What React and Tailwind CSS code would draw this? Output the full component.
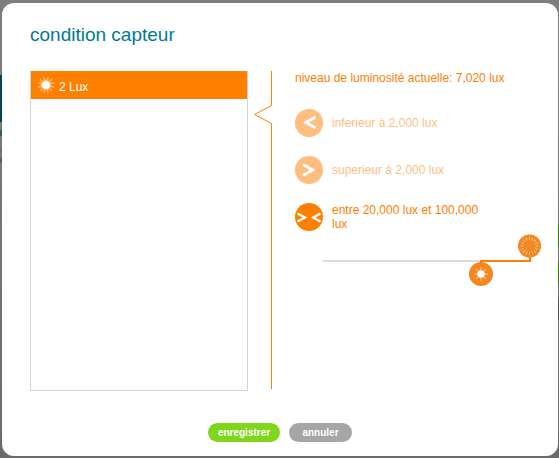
import React, { useState } from 'react';

const conditions = [
  { id: 'below', label: 'inferieur à 2,000 lux', paths: ['M20.5 8 11 13.500l9.500 5.500'] },
  { id: 'above', label: 'superieur à 2,000 lux', paths: ['m8 8.500 9.500 5.500L8 19.500'] },
  { id: 'between', label: 'entre 20,000 lux et 100,000 lux', paths: ['m2.500 10.500 7.500 4-7.500 4', 'm25.500 10.500-7.500 4 7.500 4'] },
];

function Rays({ count, from, to, cx, cy, offset = 0, ...props }) {
  return (
    <g stroke="#fff" {...props}>
      {Array.from({ length: count }, (_, i) => (
        <line
          key={i}
          x1={cx + from}
          y1={cy}
          x2={cx + to}
          y2={cy}
          transform={`rotate(${(i * 360) / count + offset} ${cx} ${cy})`}
        />
      ))}
    </g>
  );
}

function SunIcon() {
  return (
    <svg viewBox="0 0 18 18" className="size-[18px]" aria-hidden="true">
      <circle cx="9" cy="9" r="5.800" fill="#fff" opacity="0.3" />
      <Rays count={12} from={5.5} to={8.5} cx={9} cy={9} offset={15} strokeWidth="1.5" opacity="0.4" />
      <circle cx="9" cy="9" r="4.300" fill="#fff" />
    </svg>
  );
}

function ConditionOption({ option, checked, onSelect }) {
  return (
    <label className={`flex cursor-pointer items-center gap-[9px] ${checked ? '' : 'opacity-50'}`}>
      <input
        type="radio"
        name="condition"
        value={option.id}
        checked={checked}
        onChange={() => onSelect(option.id)}
        className="sr-only"
      />
      <svg viewBox="0 0 28 28" className="size-7 shrink-0" fill="none" aria-hidden="true">
        <circle cx="14" cy="14" r="14" fill="#ff7f00" />
        {option.paths.map((d) => (
          <path key={d} d={d} stroke="#fff" strokeWidth={option.paths.length > 1 ? 2.2 : 3} />
        ))}
      </svg>
      <span className="max-w-[160px]">{option.label}</span>
    </label>
  );
}

function LuxRange() {
  return (
    <svg viewBox="0 0 220 52" className="ml-7 h-[52px] w-[220px]" role="img" aria-label="20,000 - 100,000 lux">
      <path d="M0 27h158" stroke="#dcdcdc" strokeWidth="2" />
      <circle cx="206.500" cy="12" r="11.500" fill="#f6861f" />
      <Rays count={16} from={6} to={9} cx={206.5} cy={12} strokeWidth="1" opacity="0.55" />
      <circle cx="158" cy="40" r="12" fill="#f6861f" />
      <Rays count={8} from={4} to={7} cx={158} cy={40} strokeWidth="1" opacity="0.5" />
      <circle cx="158" cy="40" r="3.800" fill="#fff" />
      <path d="M158 30v-3h49v-4" stroke="#ff7f00" strokeWidth="2" fill="none" />
    </svg>
  );
}

function Backdrop() {
  return (
    <div className="absolute inset-0 -z-10 bg-gradient-to-b from-[#7f7f7f] to-[#6b6b6b]" aria-hidden="true">
      <div className="absolute left-0 top-[75px] h-[47px] w-2 bg-[#004455]" />
      <div className="absolute left-0 top-[130px] h-[6px] w-2 bg-[#2f5c66]" />
      <div className="absolute left-0 top-[150px] h-px w-2 bg-[#5f5f5f]" />
      <div className="absolute left-0 top-[158px] h-[5px] w-2 bg-[#606060]" />
      <div className="absolute right-0 top-[225px] h-[21px] w-2 bg-[#3d7508]" />
      <div className="absolute right-0 top-[262px] h-[21px] w-2 bg-[#3d7508]" />
      <div className="absolute right-0 top-[298px] h-[22px] w-2 bg-[#505050]" />
    </div>
  );
}

export default function App() {
  const [selected, setSelected] = useState('between');

  return (
    <div className="relative isolate flex min-h-screen flex-col pt-[3px] pr-px pb-0.5 pl-0.5 font-['Liberation_Sans',Arial,sans-serif] text-xs">
      <Backdrop />
      <main className="flex grow flex-col rounded-xl bg-white px-7 pt-5 pb-3.5">
        <h1 className="text-[19px] leading-6 text-[#007b92]">condition capteur</h1>

        <div className="mt-6 flex">
          <ul className="h-80 w-[218px] shrink-0 border border-t-0 border-[#d3d3d3]">
            <li>
              <button
                type="button"
                className="flex h-7 w-full items-center gap-1 bg-[#ff7f00] px-1.5 text-left text-white"
              >
                <SunIcon />
                <span className="pt-1">2 Lux</span>
              </button>
            </li>
          </ul>

          <svg viewBox="0 0 20 318" className="ml-1.5 h-[318px] w-5 shrink-0" fill="none" aria-hidden="true">
            <path d="M17.500 0v34.500l-17 9 17 9V318" stroke="#ff7f00" />
          </svg>

          <section className="ml-[21px] min-w-0 leading-[14px] text-[#ff7f00]">
            <h2>niveau de luminosité actuelle: 7,020 lux</h2>
            <div className="mt-6 flex flex-col gap-[19px]" role="radiogroup" aria-label="condition">
              {conditions.map((option) => (
                <ConditionOption
                  key={option.id}
                  option={option}
                  checked={selected === option.id}
                  onSelect={setSelected}
                />
              ))}
            </div>
            <div className="mt-[3px]">
              <LuxRange />
            </div>
          </section>
        </div>

        <div className="mt-auto flex justify-center gap-[9px] text-[10px] font-bold text-white">
          <button type="button" className="h-[19px] w-[72px] rounded-full bg-[#80d61a]">
            enregistrer
          </button>
          <button type="button" className="h-[19px] w-[63px] rounded-full bg-[#a5a6a8]">
            annuler
          </button>
        </div>
      </main>
    </div>
  );
}
